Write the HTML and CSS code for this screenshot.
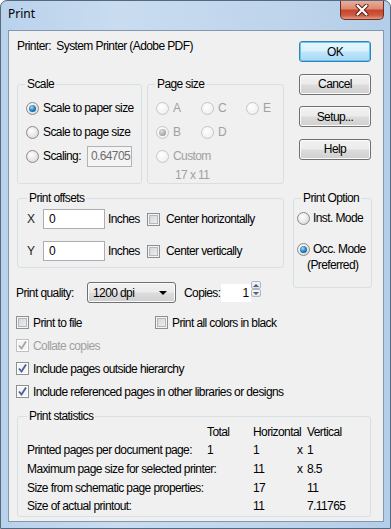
FILE: index.html
```html
<!DOCTYPE html>
<html lang="en">
<head>
  <meta charset="UTF-8" />
  <meta name="viewport" content="width=device-width, initial-scale=1.0" />
  <title>Print</title>
  <link rel="stylesheet" href="styles.css">
</head>
<body>
  <div class="window">
    <div class="titlebar">
      <span class="title">Print</span>
      <span class="close-btn">
        <svg width="14" height="12" viewBox="0 0 14 12">
          <path d="M2.5 1.5 L11.5 10.5 M11.5 1.5 L2.5 10.5" stroke="#5a2018" stroke-width="4" stroke-linecap="round"/>
          <path d="M2.5 1.5 L11.5 10.5 M11.5 1.5 L2.5 10.5" stroke="#ffffff" stroke-width="2.2" stroke-linecap="round"/>
        </svg>
      </span>
    </div>

    <div class="client">
      <div class="upper">
        <div class="upper-left">
          <p class="printer">Printer:&nbsp; System Printer (Adobe PDF)</p>
          <div class="group-row">
            <fieldset class="group scale-group">
              <legend>Scale</legend>
              <div class="opt"><span class="radio checked"></span>Scale to paper size</div>
              <div class="opt"><span class="radio"></span>Scale to page size</div>
              <div class="opt"><span class="radio"></span>Scaling:<span class="scaling-field">0.64705</span></div>
            </fieldset>
            <fieldset class="group page-group">
              <legend>Page size</legend>
              <div class="page-grid">
                <div class="opt disabled"><span class="radio"></span>A</div>
                <div class="opt disabled"><span class="radio"></span>C</div>
                <div class="opt disabled"><span class="radio"></span>E</div>
                <div class="opt disabled"><span class="radio checked"></span>B</div>
                <div class="opt disabled"><span class="radio"></span>D</div>
                <div></div>
                <div class="opt disabled wide"><span class="radio"></span>Custom</div>
                <div class="custom-size wide">17 x 11</div>
              </div>
            </fieldset>
          </div>
        </div>
        <div class="buttons">
          <button class="btn default">OK</button>
          <button class="btn">Cancel</button>
          <button class="btn">Setup...</button>
          <button class="btn">Help</button>
        </div>
      </div>

      <div class="middle">
        <div class="middle-left">
          <fieldset class="group offsets-group">
            <legend>Print offsets</legend>
            <div class="offset-grid">
              <span class="axis">X</span>
              <span class="textbox">0</span>
              <span class="unit">Inches</span>
              <div class="opt"><span class="check"></span>Center horizontally</div>
              <span class="axis">Y</span>
              <span class="textbox">0</span>
              <span class="unit">Inches</span>
              <div class="opt"><span class="check"></span>Center vertically</div>
            </div>
          </fieldset>
          <div class="quality-row">
            <span class="quality-label">Print quality:</span>
            <span class="combo">1200 dpi<span class="combo-arrow"></span></span>
            <span class="copies-label">Copies:</span>
            <span class="copies-field">1</span>
            <span class="spin">
              <span class="spin-btn"><span class="up"></span></span>
              <span class="spin-btn"><span class="down"></span></span>
            </span>
          </div>
        </div>
        <fieldset class="group option-group">
          <legend>Print Option</legend>
          <div class="opt"><span class="radio"></span>Inst. Mode</div>
          <div class="opt occ"><span class="radio checked"></span>Occ. Mode</div>
          <div class="preferred">(Preferred)</div>
        </fieldset>
      </div>

      <div class="checks">
        <div class="opt"><span class="check"></span>Print to file</div>
        <div class="opt"><span class="check"></span>Print all colors in black</div>
        <div class="opt disabled full"><span class="check checked"><svg width="11" height="11" viewBox="0 0 11 11"><path d="M2 5.5 L4.5 8.5 L9 1.5" fill="none" stroke="#a6a6a6" stroke-width="1.8"/></svg></span>Collate copies</div>
        <div class="opt full"><span class="check checked"><svg width="11" height="11" viewBox="0 0 11 11"><path d="M2 5.5 L4.5 8.5 L9 1.5" fill="none" stroke="#4a5f97" stroke-width="1.8"/></svg></span>Include pages outside hierarchy</div>
        <div class="opt full"><span class="check checked"><svg width="11" height="11" viewBox="0 0 11 11"><path d="M2 5.5 L4.5 8.5 L9 1.5" fill="none" stroke="#4a5f97" stroke-width="1.8"/></svg></span>Include referenced pages in other libraries or designs</div>
      </div>

      <fieldset class="group stats-group">
        <legend>Print statistics</legend>
        <div class="stats">
          <span class="c2">Total</span>
          <span class="c3">Horizontal</span>
          <span class="c5">Vertical</span>

          <span class="c1">Printed pages per document page:</span>
          <span class="c2">1</span>
          <span class="c3">1</span>
          <span class="c4">x</span>
          <span class="c5">1</span>

          <span class="span2">Maximum page size for selected printer:</span>
          <span class="c3">11</span>
          <span class="c4">x</span>
          <span class="c5">8.5</span>

          <span class="span2">Size from schematic page properties:</span>
          <span class="c3">17</span>
          <span class="c5">11</span>

          <span class="span2">Size of actual printout:</span>
          <span class="c3">11</span>
          <span class="c5">7.11765</span>
        </div>
      </fieldset>
    </div>
  </div>
</body>
</html>
```

FILE: styles.css
```css
* {
  box-sizing: border-box;
}
body {
  margin: 0;
  background-color: #ffffff;
  font-family: "Liberation Sans", Arial, sans-serif;
  font-size: 12px;
  letter-spacing: -0.6px;
  color: #000;
}
.window {
  width: 391px;
  height: 529px;
  border: 1px solid #56687e;
  border-radius: 7px 7px 0 0;
  background: linear-gradient(90deg, #b9d2ec 0%, #c9dcf0 30%, #bfd5ec 70%, #b4cde8 100%);
  overflow: hidden;
}
.titlebar {
  height: 29px;
  display: flex;
  align-items: flex-start;
}
.title {
  font-family: "Noto Sans", "Liberation Sans", sans-serif;
  font-size: 12px;
  letter-spacing: 0;
  line-height: 16px;
  margin: 5px 0 0 7px;
}
.close-btn {
  margin: -1px 6px 0 auto;
  width: 44px;
  height: 20px;
  border: 1px solid #6e2d22;
  border-top: none;
  border-radius: 0 0 5px 5px;
  background: linear-gradient(#e9b3a2 0%, #dc8a72 45%, #c8452b 55%, #cc5a40 80%, #e39a82 100%);
  display: flex;
  align-items: center;
  justify-content: center;
}

.client {
  margin-left: 7px;
  width: 376px;
  height: 492px;
  border: 1px solid #8397ae;
  background-color: #f0f0f0;
}

/* group boxes */
.group {
  margin: 0;
  border: 1px solid #d5dfe5;
  border-radius: 3px;
  padding: 5px 7px 0;
  min-width: 0;
}
.group legend {
  padding: 0 2px;
  line-height: 14px;
  white-space: nowrap;
}
.opt {
  display: flex;
  align-items: center;
  height: 24px;
  white-space: nowrap;
}
.opt.disabled {
  color: #a0a0a0;
}

/* radios and checks */
.radio {
  flex: none;
  width: 13px;
  height: 13px;
  margin: 0 4px 0 1px;
  border-radius: 50%;
  border: 1px solid #8b8b8b;
  background: radial-gradient(circle at 40% 35%, #ffffff 0%, #ececec 45%, #cfcfcf 100%);
  display: flex;
  align-items: center;
  justify-content: center;
}
.radio.checked::after {
  content: "";
  width: 7px;
  height: 7px;
  border-radius: 50%;
  background: radial-gradient(circle at 40% 35%, #a6dcf8 0%, #2f86c8 45%, #0e3d6c 100%);
}
.disabled .radio {
  border-color: #c6c6c6;
  background: radial-gradient(circle at 40% 35%, #ffffff 0%, #f3f3f3 60%, #e6e6e6 100%);
}
.disabled .radio.checked::after {
  background: radial-gradient(circle at 40% 35%, #e0e0e0 0%, #a8a8a8 60%, #8c8c8c 100%);
}
.check {
  flex: none;
  width: 13px;
  height: 13px;
  margin-right: 4px;
  border: 1px solid #8e8f8f;
  background: linear-gradient(135deg, #cfd3d8 0%, #f2f2f2 100%);
  box-shadow: inset 0 0 0 1px #f4f4f4, inset 0 0 0 2px #b4b9be;
  display: flex;
  align-items: center;
  justify-content: center;
}
.check.checked {
  background: #f4f4f4;
  box-shadow: inset 0 0 0 1px #ffffff;
}
.disabled .check {
  border-color: #c0c0c0;
}

/* upper area */
.upper {
  display: grid;
  grid-template-columns: 267px 72px;
  column-gap: 15px;
  padding-left: 8px;
  height: 153px;
}
.printer {
  margin: 7px 0 0;
  line-height: 16px;
}
.group-row {
  display: flex;
  margin-top: 23px;
}
.scale-group {
  width: 125px;
  height: 107px;
}
.scaling-field {
  margin-left: 6px;
  width: 45px;
  height: 21px;
  border: 1px solid #b3b3b3;
  background-color: #f4f4f4;
  color: #6d6d6d;
  padding-left: 3px;
  line-height: 19px;
}
.page-group {
  width: 137px;
  height: 107px;
  margin-left: 5px;
}
.page-grid {
  display: grid;
  grid-template-columns: 45px 45px auto;
}
.page-grid .wide {
  grid-column: 1 / 4;
}
.custom-size {
  color: #a0a0a0;
  line-height: 14px;
  padding-left: 20px;
}
.buttons {
  display: flex;
  flex-direction: column;
  gap: 11.5px;
  padding-top: 10px;
}
.btn {
  height: 21px;
  width: 72px;
  font: inherit;
  letter-spacing: -0.6px;
  color: #000;
  border: 1px solid #707070;
  border-radius: 3px;
  background: linear-gradient(#f2f2f2 0%, #ebebeb 48%, #dddddd 52%, #cfcfcf 100%);
  box-shadow: inset 0 0 0 1px #fbfbfb;
  padding: 0;
}
.btn.default {
  border-color: #3c7fb1;
  background: linear-gradient(#eaf6fd 0%, #d9f0fc 48%, #bee6fd 52%, #a7d9f5 100%);
  box-shadow: inset 0 0 0 1px #5ec8f5;
}

/* middle area */
.middle {
  display: grid;
  grid-template-columns: 267px 79px;
  column-gap: 9px;
  padding: 7px 0 0 8px;
  align-items: start;
}
.offsets-group {
  padding: 4px 9px 6px;
}
.offset-grid {
  display: grid;
  grid-template-columns: 16px 62px 42px auto;
  grid-auto-rows: 20px;
  row-gap: 12px;
  align-items: center;
}
.axis {
  color: #222;
}
.textbox {
  height: 20px;
  border: 1px solid #abadb3;
  background-color: #ffffff;
  padding-left: 5px;
  line-height: 18px;
}
.unit {
  padding-left: 3px;
}
.offset-grid .opt {
  height: 20px;
}
.offset-grid .check {
  margin-right: 6px;
}
.quality-row {
  display: flex;
  align-items: center;
  margin: 14px 0 0 -1px;
  height: 21px;
  white-space: nowrap;
}
.quality-label {
  width: 71px;
}
.combo {
  width: 89px;
  height: 21px;
  border: 1px solid #707070;
  border-radius: 3px;
  background: linear-gradient(#f2f2f2 0%, #ebebeb 48%, #dddddd 52%, #cfcfcf 100%);
  box-shadow: inset 0 0 0 1px #fbfbfb;
  display: flex;
  align-items: center;
  padding-left: 5px;
}
.combo-arrow {
  margin: 1px 8px 0 auto;
  border-left: 4px solid transparent;
  border-right: 4px solid transparent;
  border-top: 4px solid #000;
}
.copies-label {
  flex: none;
  margin-left: 8px;
}
.copies-field {
  width: 30px;
  height: 18px;
  background-color: #ffffff;
  text-align: right;
  padding-right: 2px;
  line-height: 18px;
}
.spin {
  display: flex;
  flex-direction: column;
  align-self: flex-start;
  margin-top: -1px;
}
.spin-btn {
  width: 10px;
  height: 8px;
  border: 1px solid #b2b7bf;
  border-radius: 2px;
  background: linear-gradient(#f6f6f6, #dfe3e8);
  display: flex;
  align-items: center;
  justify-content: center;
}
.spin-btn .up {
  border-left: 3px solid transparent;
  border-right: 3px solid transparent;
  border-bottom: 3px solid #4c607a;
}
.spin-btn .down {
  border-left: 3px solid transparent;
  border-right: 3px solid transparent;
  border-top: 3px solid #4c607a;
}
.option-group {
  height: 97px;
  padding: 0 2px;
}
.option-group legend {
  margin-left: 5px;
}
.option-group .opt {
  height: 26px;
}
.option-group .radio {
  margin-right: 3px;
}
.option-group .occ {
  margin-top: 5px;
}
.preferred {
  padding-left: 11px;
  line-height: 14px;
  margin-top: -4px;
}

/* check rows */
.checks {
  display: grid;
  grid-template-columns: 139px auto;
  grid-auto-rows: 23px;
  padding: 8px 0 0 7px;
}
.checks .opt {
  height: 23px;
}
.checks .full {
  grid-column: 1 / 3;
}

/* statistics */
.stats-group {
  margin: 6px 0 0 8px;
  width: 354px;
  height: 108px;
  padding: 1px 9px 0;
}
.stats {
  display: grid;
  grid-template-columns: 180px 46px 44px 10px auto;
  grid-template-rows: 16px 19px 19px 19px 18px;
  align-items: center;
  white-space: nowrap;
}
.c1 { grid-column: 1; }
.c2 { grid-column: 2; }
.c3 { grid-column: 3; }
.c4 { grid-column: 4; }
.c5 { grid-column: 5; }
.span2 { grid-column: 1 / 3; }
```
